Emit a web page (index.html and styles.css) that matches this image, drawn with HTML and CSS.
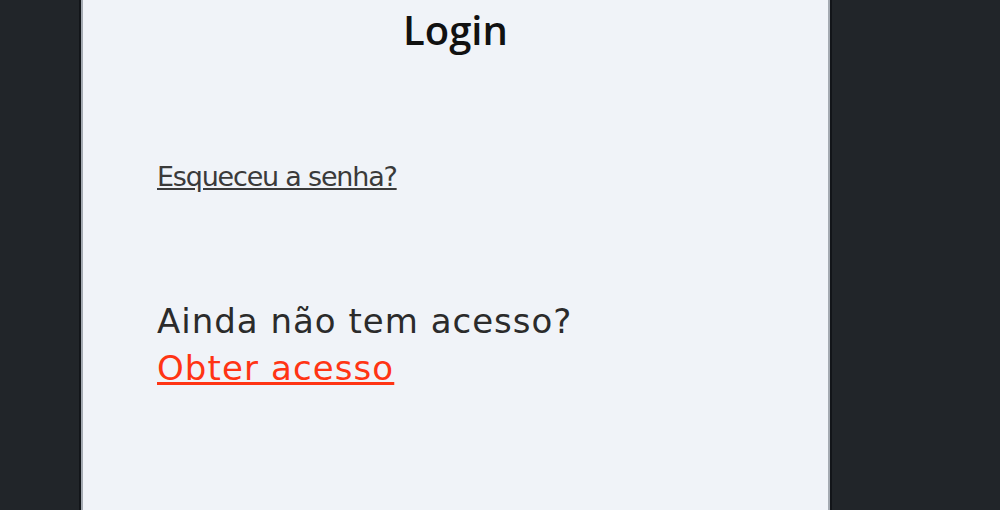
FILE: index.html
```html
<!DOCTYPE html>
<html>
<head>
  <title>Login</title>
  <meta name="viewport" content="width=device-width, initial-scale=1.0" />
  <link rel="stylesheet" href="styles.css">
</head>
<body>
  <div class="panel">
    <h2 class="title">Login</h2>

    <div class="content">
      <a class="forgot" href="#">Esqueceu a senha?</a>

      <div class="signup">
        <p>Ainda não tem acesso?</p>
        <a class="get-access" href="#">Obter acesso</a>
      </div>
    </div>
  </div>
</body>
</html>
```

FILE: styles.css
```css
html, body { margin: 0; height: 100%; }
body { background: #212529; font-family: "DejaVu Sans", sans-serif; color: #333; overflow: hidden; }
.panel { width: 749px; height: 510px; margin-left: 79px; background: #f0f3f8; border-left: 2px solid #121519; border-right: 2px solid #121519; box-shadow: inset 2px 0 0 #a4aab2, inset -2px 0 0 #a4aab2; }
.title { margin: 0; padding-top: 6px; text-align: center; font-family: "Open Sans", sans-serif; font-weight: 600; font-size: 40px; line-height: 48px; color: #111; }
.content { padding-left: 76px; }
.forgot { display: inline-block; margin-top: 107px; font-size: 27px; letter-spacing: -1.2px; color: #3a3a3a; text-decoration: underline; }
.signup { margin-top: 106px; }
.signup p { margin: 0; font-size: 34px; letter-spacing: 1px; line-height: 47px; color: #2b2b2b; }
.get-access { font-size: 34px; letter-spacing: 1.1px; line-height: 47px; color: #ff3414; text-decoration: underline; }
```
